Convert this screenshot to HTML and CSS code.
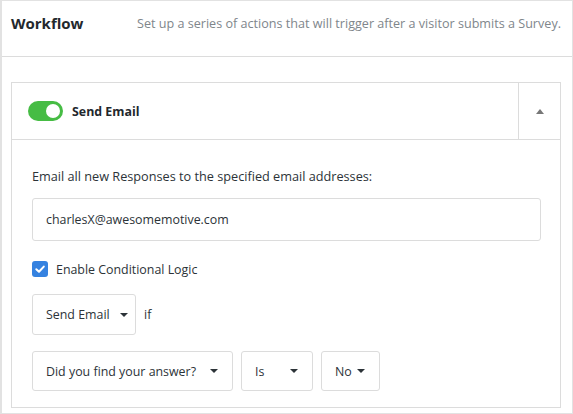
FILE: index.html
```html
<!DOCTYPE html>
<html>
<head>
<meta charset="utf-8">
<link rel="stylesheet" href="styles.css">
</head>
<body>
<div class="frame">
  <div class="head">
    <div class="title">Workflow</div>
    <div class="desc">Set up a series of actions that will trigger after a visitor submits a Survey.</div>
  </div>
  <div class="content">
    <div class="panel">
      <div class="panel-head">
        <div class="ph-left">
          <span class="toggle"><span class="knob"></span></span>
          <span class="ph-title">Send Email</span>
        </div>
        <div class="collapse"><span class="tri-up"></span></div>
      </div>
      <div class="panel-body">
        <div class="lead">Email all new Responses to the specified email addresses:</div>
        <div class="input">charlesX@awesomemotive.com</div>
        <div class="check-row">
          <span class="checkbox"><svg width="16" height="16" viewBox="0 0 16 16"><path d="M4.3 8.2 L7 10.8 L11.8 5.6" fill="none" stroke="#fff" stroke-width="2" stroke-linecap="round" stroke-linejoin="round"/></svg></span>
          <span class="check-label">Enable Conditional Logic</span>
        </div>
        <div class="row row1">
          <div class="select s-action"><span>Send Email</span><span class="caret"></span></div>
          <span class="if">if</span>
        </div>
        <div class="row row2">
          <div class="select s-q"><span>Did you find your answer?</span><span class="caret"></span></div>
          <div class="select s-op"><span>Is</span><span class="caret"></span></div>
          <div class="select s-val"><span>No</span><span class="caret"></span></div>
        </div>
      </div>
    </div>
  </div>
</div>
</body>
</html>
```
FILE: styles.css
```css
* { box-sizing: border-box; }
html, body { margin: 0; padding: 0; background: #fff; }
body {
  font-family: "Open Sans", "Noto Sans", sans-serif;
  font-size: 12.4px;
  color: #2c3338;
}
.frame {
  width: 573px;
  height: 414px;
  border: 1px solid #e2e2e2;
  border-left-width: 2px;
  overflow: hidden;
}
.head {
  height: 56px;
  border-bottom: 1px solid #dcdcdc;
  display: flex;
  align-items: center;
  padding: 0 0 11px 9px;
}
.title {
  font-weight: 700;
  font-size: 15px;
  color: #23282d;
  width: 126px;
  flex: none;
}
.desc {
  color: #80868b;
  font-size: 12.6px;
  white-space: nowrap;
}
.content {
  padding: 25px 11px 5px 9px;
}
.panel {
  border: 1px solid #dcdcdc;
}
.panel-head {
  display: flex;
  height: 57px;
  border-bottom: 1px solid #dcdcdc;
}
.ph-left {
  flex: 1;
  display: flex;
  align-items: center;
  padding-left: 16px;
  gap: 9px;
}
.toggle {
  width: 35px;
  height: 20px;
  border-radius: 10px;
  background: #46bc44;
  position: relative;
  display: inline-block;
}
.knob {
  position: absolute;
  right: 3px;
  top: 3px;
  width: 14px;
  height: 14px;
  border-radius: 50%;
  background: #fff;
}
.ph-title {
  font-weight: 700;
  font-size: 12.4px;
  color: #23282d;
}
.collapse {
  width: 42px;
  border-left: 1px solid #dcdcdc;
  display: flex;
  align-items: center;
  justify-content: center;
}
.tri-up {
  width: 0;
  height: 0;
  border-left: 4.5px solid transparent;
  border-right: 4.5px solid transparent;
  border-bottom: 5px solid #777;
  margin-top: 0;
}
.panel-body {
  padding: 26px 19px 16px 20px;
}
.lead {
  line-height: 20px;
  font-size: 12.7px;
}
.input {
  margin-top: 12px;
  height: 43px;
  border: 1px solid #dcdcdc;
  border-radius: 3px;
  display: flex;
  align-items: center;
  padding-left: 13px;
  color: #2c3338;
}
.check-row {
  margin-top: 20px;
  display: flex;
  align-items: center;
  gap: 8px;
  height: 16px;
}
.checkbox {
  width: 16px;
  height: 16px;
  border-radius: 3px;
  background: #3582e0;
  display: inline-flex;
}
.row {
  display: flex;
  align-items: center;
}
.row1 { margin-top: 17px; gap: 8px; }
.row2 { margin-top: 16px; gap: 8px; }
.select {
  display: flex;
  align-items: center;
  justify-content: space-between;
  border: 1px solid #dcdcdc;
  border-radius: 3px;
  padding-left: 13px;
  color: #2c3338;
}
.s-action { width: 104px; height: 41px; padding-right: 7px; }
.s-q { width: 201px; height: 40px; padding-right: 14px; }
.s-op { width: 72px; height: 40px; padding-right: 14px; }
.s-val { width: 59px; height: 40px; padding-right: 14px; }
.caret {
  width: 0;
  height: 0;
  border-left: 4px solid transparent;
  border-right: 4px solid transparent;
  border-top: 4px solid #2c3338;
}
.if { margin-left: 0; }
```
